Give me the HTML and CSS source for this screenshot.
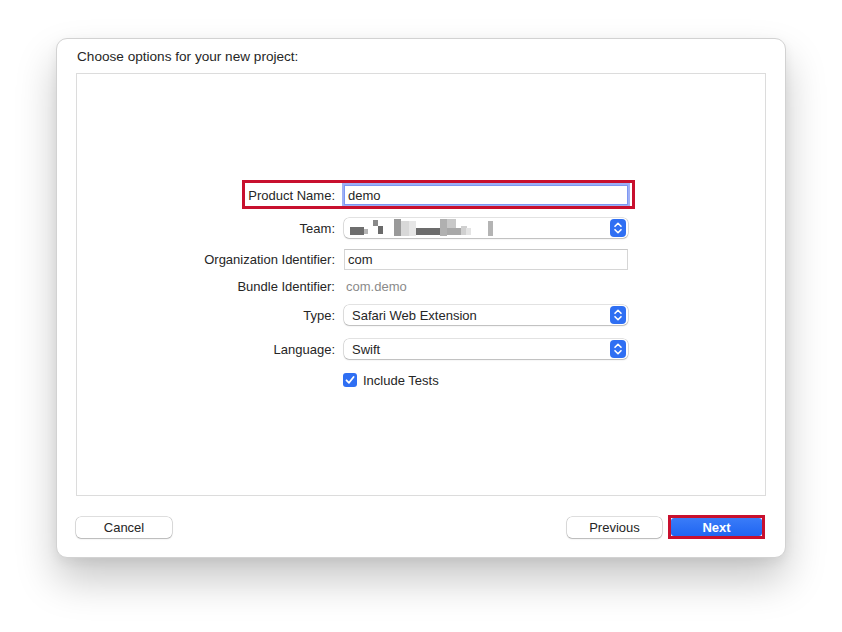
FILE: index.html
```html
<!DOCTYPE html>
<html>
<head>
<meta charset="utf-8">
<link rel="stylesheet" href="styles.css">
</head>
<body>
<div class="dialog">
  <div class="title">Choose options for your new project:</div>
  <div class="panel">
    <div class="form">
      <div class="row row-product">
        <div class="label">Product Name:</div>
        <div class="field input focused">demo</div>
        <div class="highlight highlight-product"></div>
      </div>
      <div class="row row-team">
        <div class="label">Team:</div>
        <div class="field popup">
          <svg class="blur" width="160" height="20" viewBox="0 0 160 20">
            <rect x="6" y="9" width="14" height="8" fill="#6e6e6e"/>
            <rect x="20" y="11" width="4" height="5" fill="#b5b5b5"/>
            <rect x="29" y="2" width="5" height="6" fill="#8a8a8a"/>
            <rect x="34" y="8" width="5" height="8" fill="#6a6a6a"/>
            <rect x="50" y="1" width="7" height="17" fill="#9a9a9a"/>
            <rect x="57" y="3" width="8" height="15" fill="#d8d8d8"/>
            <rect x="65" y="3" width="7" height="15" fill="#e6e6e6"/>
            <rect x="72" y="10" width="24" height="7" fill="#6c6c6c"/>
            <rect x="96" y="1" width="7" height="17" fill="#b0b0b0"/>
            <rect x="103" y="1" width="9" height="12" fill="#c8c8c8"/>
            <rect x="103" y="10" width="14" height="7" fill="#a8a8a8"/>
            <rect x="117" y="8" width="6" height="9" fill="#d0d0d0"/>
            <rect x="122" y="10" width="5" height="7" fill="#e4e4e4"/>
            <rect x="144" y="3" width="5" height="15" fill="#b4b4b4"/>
          </svg>
          <span class="stepper"><svg width="16" height="18" viewBox="0 0 16 18"><rect x="0" y="0" width="16" height="18" rx="4" fill="#2f6ff3"/><path d="M5 7.3 L8 4.3 L11 7.3 M5 10.7 L8 13.7 L11 10.7" stroke="#fff" stroke-width="1.6" fill="none" stroke-linecap="round" stroke-linejoin="round"/></svg></span>
        </div>
      </div>
      <div class="row row-org">
        <div class="label">Organization Identifier:</div>
        <div class="field input">com</div>
      </div>
      <div class="row row-bundle">
        <div class="label">Bundle Identifier:</div>
        <div class="field value">com.demo</div>
      </div>
      <div class="row row-type">
        <div class="label">Type:</div>
        <div class="field popup">
          <span class="popup-text">Safari Web Extension</span>
          <span class="stepper"><svg width="16" height="18" viewBox="0 0 16 18"><rect x="0" y="0" width="16" height="18" rx="4" fill="#2f6ff3"/><path d="M5 7.3 L8 4.3 L11 7.3 M5 10.7 L8 13.7 L11 10.7" stroke="#fff" stroke-width="1.6" fill="none" stroke-linecap="round" stroke-linejoin="round"/></svg></span>
        </div>
      </div>
      <div class="row row-lang">
        <div class="label">Language:</div>
        <div class="field popup">
          <span class="popup-text">Swift</span>
          <span class="stepper"><svg width="16" height="18" viewBox="0 0 16 18"><rect x="0" y="0" width="16" height="18" rx="4" fill="#2f6ff3"/><path d="M5 7.3 L8 4.3 L11 7.3 M5 10.7 L8 13.7 L11 10.7" stroke="#fff" stroke-width="1.6" fill="none" stroke-linecap="round" stroke-linejoin="round"/></svg></span>
        </div>
      </div>
      <div class="row row-check">
        <div class="label"></div>
        <div class="check">
          <svg width="14" height="14" viewBox="0 0 14 14"><rect x="0" y="0" width="14" height="14" rx="3" fill="#2f6ff3"/><path d="M3.5 7.3 L6 9.8 L10.6 4" stroke="#fff" stroke-width="1.8" fill="none" stroke-linecap="round" stroke-linejoin="round"/></svg>
          <span>Include Tests</span>
        </div>
      </div>
    </div>
  </div>
  <div class="buttons">
    <div class="btn btn-cancel">Cancel</div>
    <div class="spacer"></div>
    <div class="btn btn-prev">Previous</div>
    <div class="next-wrap">
      <div class="btn btn-next">Next</div>
    </div>
  </div>
</div>
</body>
</html>
```
FILE: styles.css
```css
html, body {
  margin: 0;
  padding: 0;
  background: #ffffff;
}
body {
  font-family: "Liberation Sans", Arial, sans-serif;
  font-size: 13px;
  color: #262626;
  width: 842px;
  height: 632px;
  overflow: hidden;
}
.dialog {
  margin: 38px 0 0 56px;
  width: 690px;
  height: 518px;
  background: #ffffff;
  border: 1px solid #d2d2d2;
  border-radius: 11px;
  box-shadow: 0 22px 40px rgba(0, 0, 0, 0.22), 0 4px 12px rgba(0, 0, 0, 0.06);
  display: flex;
  flex-direction: column;
  padding: 0 19px;
  box-sizing: content-box;
}
.title {
  height: 34px;
  line-height: 36px;
  padding-left: 1px;
  font-size: 13.6px;
  color: #262626;
}
.panel {
  height: 421px;
  border: 1px solid #dcdcdc;
  background: #ffffff;
}
.form {
  padding-top: 111px;
  display: flex;
  flex-direction: column;
}
.row {
  display: flex;
  align-items: center;
  height: 20px;
  position: relative;
}
.label {
  width: 258px;
  text-align: right;
  padding-right: 9px;
  flex: none;
  color: #262626;
}
.field {
  width: 284px;
  height: 20px;
  box-sizing: border-box;
  display: flex;
  align-items: center;
}
.input {
  border: 1px solid #d6d6d6;
  border-top-color: #c8c8c8;
  padding-left: 3px;
  background: #fff;
}
.input.focused {
  border: 1px solid #7d97f2;
  box-shadow: 0 0 0 2px rgba(125, 150, 242, 0.75);
  width: 284px;
}
.row-team { margin-top: 13px; }
.row-org { margin-top: 11px; height: 21px; }
.row-org .field { height: 21px; }
.row-bundle { margin-top: 7px; height: 18px; }
.row-type { margin-top: 10px; }
.row-lang { margin-top: 14px; }
.row-check { margin-top: 14px; height: 14px; }
.value {
  color: #8a8a8a;
  padding-left: 2px;
}
.popup {
  border-radius: 5px;
  background: #fff;
  box-shadow: 0 0 0 0.5px rgba(0, 0, 0, 0.22), 0 1px 1.5px rgba(0, 0, 0, 0.18);
  padding-left: 8px;
  padding-right: 2px;
  justify-content: space-between;
}
.row-team .popup { padding-left: 0; }
.blur { display: block; }
.stepper {
  display: flex;
  flex: none;
}
.stepper svg { display: block; }
.popup-text { color: #262626; }
.check {
  display: flex;
  align-items: center;
  gap: 6px;
  margin-left: -1px;
}
.check svg { display: block; }
.highlight {
  position: absolute;
  border: 3px solid #c8102e;
  pointer-events: none;
}
.highlight-product {
  left: 165px;
  top: -5px;
  width: 387px;
  height: 23px;
}
.buttons {
  display: flex;
  align-items: center;
  margin-top: 19px;
  height: 24px;
}
.spacer { flex: 1; }
.btn {
  height: 21px;
  box-sizing: border-box;
  display: flex;
  align-items: center;
  justify-content: center;
  border-radius: 5px;
  background: #fff;
  box-shadow: 0 0 0 0.5px rgba(0, 0, 0, 0.25), 0 1px 1.5px rgba(0, 0, 0, 0.18);
  color: #262626;
}
.btn-cancel { width: 96px; }
.btn-prev { width: 95px; margin-right: 6px; }
.next-wrap {
  border: 3px solid #c8102e;
  width: 97px;
  height: 24px;
  box-sizing: border-box;
  display: flex;
  align-items: center;
  justify-content: center;
  margin-right: 1px;
}
.btn-next {
  width: 91px;
  height: 18px;
  border-radius: 3px;
  background: linear-gradient(#3a7cf8, #1f65f2);
  box-shadow: none;
  color: #ffffff;
  font-weight: bold;
}
```
